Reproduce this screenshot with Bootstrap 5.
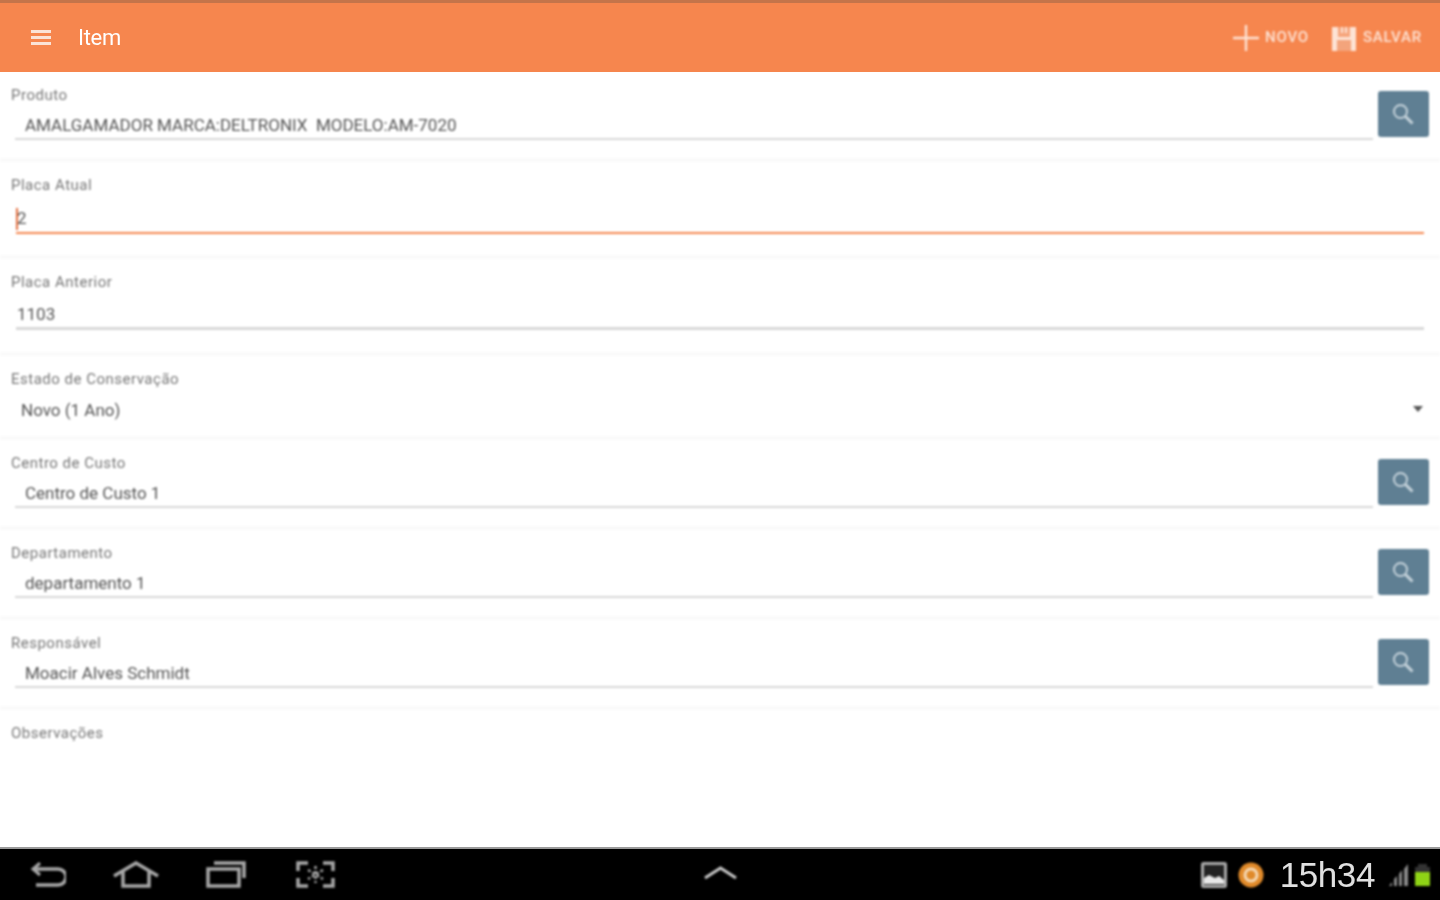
<!DOCTYPE html>
<html lang="en">
<head>
  <meta charset="UTF-8"/>
  <meta name="viewport" content="width=device-width, initial-scale=1.0"/>
  <title>Item</title>
  <link href="https://cdn.jsdelivr.net/npm/bootstrap@5.3.0/dist/css/bootstrap.min.css" rel="stylesheet"/>
  <style>
    html, body { height: 100%; }
    body { font-family: Roboto, "Liberation Sans", sans-serif; background: #fff; overflow: hidden; }
    .app-shell { height: 900px; }
    .app-bar { height: 72px; background: #f6864e; border-top: 3px solid #c4744a; padding: 0 18px 0 31px; color: #fff; }
    .app-title { font-size: 22px; letter-spacing: -.3px; margin-left: 27px; filter: blur(.7px); }
    .app-action { font-size: 15px; letter-spacing: .8px; font-weight: 500; color: #fde3d5; filter: blur(.9px); line-height: 1; }
    .app-action + .app-action { margin-left: 22px; }
    .action-icon { margin-right: 6px; }
    .form-area { flex: 1 1 auto; min-height: 0; }
    .field-row { padding: 0 11px 0 11px; border-bottom: 4px solid #fafafa; filter: blur(.9px); }
    .h-90 { height: 90px; }
    .h-97 { height: 97px; }
    .h-84 { height: 84px; }
    .field-label { font-size: 15px; letter-spacing: .5px; line-height: 16px; color: #777; padding-top: 15px; }
    .field-main { min-width: 0; }
    .field-input.form-control { border: 0; border-bottom: 2px solid #d8d8d8; border-radius: 0; background: transparent; box-shadow: none;
      font-size: 17px; color: #555; padding: 0 0 2px 10px; height: 25px; margin: 12px 0 0 4px; width: calc(100% - 4px); }
    .field-input.plain { padding-left: 1px; height: 28px; margin: 12px 0 0 5px; width: calc(100% - 10px); border-bottom-width: 3px; }
    .field-input.active { height: 29px; border-bottom: 2px solid #f6864e; }
    .caret-mark { width: 2px; height: 22px; background: #e4703f; top: 46px; left: 16px; }
    .state-select.form-select { border: 0; border-radius: 0; box-shadow: none; font-size: 17px; color: #555; padding: 0 0 0 10px; height: 24px; margin-top: 11px;
      background-image: none; }
    .state-arrow { right: 17px; top: 50px; width: 0; height: 0; border-left: 5px solid transparent; border-right: 5px solid transparent; border-top: 6px solid #555; }
    .search-btn.btn { width: 51px; height: 46px; padding: 0 2px 0 0; background: #5f7f93; border: 0; border-radius: 3px; margin-left: 5px; margin-top: 19px; }
    .nav-strip { height: 53px; background: #000; border-top: 2px solid #9a9a9a; color: #c8c8c8; padding: 0 9px 0 30px; }
    .nav-icon { display: block; filter: blur(.8px); }
    .nav-left { gap: 47px; }
    .nav-last { margin-left: 3px; }
    .nav-center { left: 703px; top: 16px; }
    .status-gap { margin-left: 11px; }
    .battery-gap { margin-left: 5px; }
    .clock-text { font-size: 35px; line-height: 1; color: #e0e0e0; margin: 0 13px 0 16px; filter: blur(.6px); font-family: "Liberation Sans", sans-serif; letter-spacing: -.4px; }
  </style>
</head>
<body>
<div class="app-shell d-flex flex-column">

  <nav class="navbar app-bar flex-nowrap justify-content-start">
    <svg width="20" height="16" viewBox="0 0 20 16" fill="#fbe3d6"><rect y="0" width="20" height="3"/><rect y="6" width="20" height="3"/><rect y="12" width="20" height="3"/></svg>
    <span class="app-title">Item</span>
    <div class="ms-auto d-flex align-items-center">
      <div class="app-action d-flex align-items-center">
        <svg class="action-icon" width="26" height="28" viewBox="0 0 26 28" stroke="#fde3d5" stroke-width="2.4"><path d="M13 1v26M0 14h26"/></svg>NOVO
      </div>
      <div class="app-action d-flex align-items-center">
        <svg class="action-icon" width="26" height="28" viewBox="0 0 26 28"><path d="M1 3h24v24H1z" fill="#fde3d5"/><path d="M7 3h12v10H7z" fill="#f6a57c"/><path d="M10 3h2v6h-2zM14 3h2v6h-2z" fill="#fde3d5"/><path d="M6 16h14v11H6z" fill="#f3a47c"/></svg>SALVAR
      </div>
    </div>
  </nav>

  <form class="form-area">
    <div class="field-row h-90 d-flex">
      <div class="field-main flex-grow-1">
        <div class="field-label">Produto</div>
        <input class="form-control field-input" type="text" value="AMALGAMADOR MARCA:DELTRONIX  MODELO:AM-7020"/>
      </div>
      <button type="button" class="btn search-btn">
        <svg width="24" height="24" viewBox="0 0 24 24" fill="none" stroke="#c4d2da" stroke-width="2"><circle cx="9.5" cy="9.5" r="6.5"/><path d="M14.500 14.500l7 7" stroke-width="3"/></svg>
      </button>
    </div>

    <div class="field-row h-97 position-relative">
      <div class="field-label">Placa Atual</div>
      <input class="form-control field-input plain active" type="text" value="2"/>
      <div class="caret-mark position-absolute"></div>
    </div>

    <div class="field-row h-97">
      <div class="field-label">Placa Anterior</div>
      <input class="form-control field-input plain" type="text" value="1103"/>
    </div>

    <div class="field-row h-84 position-relative">
      <div class="field-label">Estado de Conservação</div>
      <select class="form-select state-select"><option>Novo (1 Ano)</option></select>
      <div class="state-arrow position-absolute"></div>
    </div>

    <div class="field-row h-90 d-flex">
      <div class="field-main flex-grow-1">
        <div class="field-label">Centro de Custo</div>
        <input class="form-control field-input" type="text" value="Centro de Custo 1"/>
      </div>
      <button type="button" class="btn search-btn">
        <svg width="24" height="24" viewBox="0 0 24 24" fill="none" stroke="#c4d2da" stroke-width="2"><circle cx="9.5" cy="9.5" r="6.5"/><path d="M14.500 14.500l7 7" stroke-width="3"/></svg>
      </button>
    </div>

    <div class="field-row h-90 d-flex">
      <div class="field-main flex-grow-1">
        <div class="field-label">Departamento</div>
        <input class="form-control field-input" type="text" value="departamento 1"/>
      </div>
      <button type="button" class="btn search-btn">
        <svg width="24" height="24" viewBox="0 0 24 24" fill="none" stroke="#c4d2da" stroke-width="2"><circle cx="9.5" cy="9.5" r="6.5"/><path d="M14.500 14.500l7 7" stroke-width="3"/></svg>
      </button>
    </div>

    <div class="field-row h-90 d-flex">
      <div class="field-main flex-grow-1">
        <div class="field-label">Responsável</div>
        <input class="form-control field-input" type="text" value="Moacir Alves Schmidt"/>
      </div>
      <button type="button" class="btn search-btn">
        <svg width="24" height="24" viewBox="0 0 24 24" fill="none" stroke="#c4d2da" stroke-width="2"><circle cx="9.5" cy="9.5" r="6.5"/><path d="M14.500 14.500l7 7" stroke-width="3"/></svg>
      </button>
    </div>

    <div class="field-row border-0">
      <div class="field-label">Observações</div>
    </div>
  </form>

  <div class="nav-strip d-flex align-items-center position-relative">
    <div class="d-flex align-items-center nav-left">
      <svg class="nav-icon" width="36" height="26" viewBox="0 0 36 26" fill="none" stroke="#a8a8a8" stroke-width="3.500"><path d="M3 7h25a6.500 6.500 0 0 1 0 16H6"/><path d="M10 1L3 7l7 6" stroke-width="3"/></svg>
      <svg class="nav-icon" width="46" height="27" viewBox="0 0 46 27" fill="none" stroke="#a8a8a8" stroke-width="3.500"><path d="M1 15L23 2l22 13"/><path d="M10 10v15h26V10"/></svg>
      <svg class="nav-icon" width="40" height="27" viewBox="0 0 40 27" fill="none" stroke="#a8a8a8" stroke-width="3.500"><rect x="2" y="8" width="31" height="17"/><path d="M8 2h30v15"/></svg>
      <svg class="nav-icon nav-last" width="39" height="27" viewBox="0 0 39 27" fill="none" stroke="#a8a8a8" stroke-width="3.500"><path d="M2 10V2h10M27 2h10v8M37 17v8H27M12 25H2v-8"/><path d="M19.500 5v17M12 9l15 9M27 9l-15 9" stroke-width="2.500" stroke-dasharray="3 2"/></svg>
    </div>
    <svg class="nav-icon nav-center position-absolute" width="35" height="15" viewBox="0 0 35 15" fill="none" stroke="#c8c8c8" stroke-width="3"><path d="M2 13L17.500 3 33 13"/></svg>
    <div class="ms-auto d-flex align-items-center">
      <svg class="nav-icon" width="26" height="26" viewBox="0 0 26 26"><rect x="1.500" y="1.500" width="23" height="23" rx="1" fill="#222" stroke="#aaa" stroke-width="3"/><path d="M3 22V16l5-3 6 3 4-2 5 4v4z" fill="#e8e8e8"/></svg>
      <svg class="nav-icon status-gap" width="26" height="26" viewBox="0 0 26 26" fill="none"><circle cx="13" cy="13" r="12.500" fill="#e08a2a"/><circle cx="13" cy="13" r="6" stroke="#f5d9b5" stroke-width="3"/></svg>
      <span class="clock-text">15h34</span>
      <svg class="nav-icon" width="21" height="24" viewBox="0 0 21 24" fill="#8a8a8a"><path d="M1 23l3-4v4zM6 23v-7l3-3v10zM11 23V11l3-4v16zM16 23V6l4-5v22z"/></svg>
      <svg class="nav-icon battery-gap" width="17" height="24" viewBox="0 0 17 24"><path d="M4 1h9v3H4z" fill="#333"/><path d="M1 4h15v5H1z" fill="#333"/><path d="M1 9h15v14H1z" fill="#8fd416"/></svg>
    </div>
  </div>

</div>
<script src="https://cdn.jsdelivr.net/npm/bootstrap@5.3.0/dist/js/bootstrap.bundle.min.js"></script>
</body>
</html>
